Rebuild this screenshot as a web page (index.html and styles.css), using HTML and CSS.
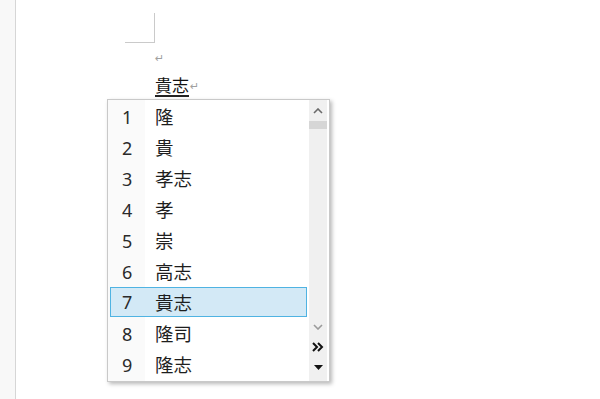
FILE: index.html
```html
<!DOCTYPE html>
<html lang="ja">
<head>
<meta charset="utf-8">
<title>IME</title>
<link rel="stylesheet" href="styles.css">
</head>
<body>
<div class="app">
  <div class="gutter"></div>
  <div class="page">
    <div class="crop"></div>
    <div class="para p1"><span class="ret">↵</span></div>
    <div class="para p2"><span class="comp">貴志</span><span class="ret">↵</span></div>
  </div>
</div>
<div class="ime">
  <div class="list">
    <div class="row"><span class="num">1</span><span class="txt">隆</span></div>
    <div class="row"><span class="num">2</span><span class="txt">貴</span></div>
    <div class="row"><span class="num">3</span><span class="txt">孝志</span></div>
    <div class="row"><span class="num">4</span><span class="txt">孝</span></div>
    <div class="row"><span class="num">5</span><span class="txt">崇</span></div>
    <div class="row"><span class="num">6</span><span class="txt">高志</span></div>
    <div class="row sel"><span class="num">7</span><span class="txt">貴志</span></div>
    <div class="row"><span class="num">8</span><span class="txt">隆司</span></div>
    <div class="row"><span class="num">9</span><span class="txt">隆志</span></div>
  </div>
  <div class="scroll">
    <div class="sbtn up"><svg width="10" height="6" viewBox="0 0 10 6"><polyline points="1,5 5,1 9,5" fill="none" stroke="#6a6a6a" stroke-width="1.6"/></svg></div>
    <div class="thumb"></div>
    <div class="spacer"></div>
    <div class="sbtn down"><svg width="10" height="6" viewBox="0 0 10 6"><polyline points="1,1 5,5 9,1" fill="none" stroke="#9a9a9a" stroke-width="1.6"/></svg></div>
    <div class="sbtn more"><svg width="12" height="10" viewBox="0 0 12 10"><polyline points="1,1 5,5 1,9" fill="none" stroke="#111" stroke-width="2"/><polyline points="6,1 10,5 6,9" fill="none" stroke="#111" stroke-width="2"/></svg></div>
    <div class="sbtn tri"><svg width="9" height="5" viewBox="0 0 9 5"><polygon points="0,0 9,0 4.5,5" fill="#111"/></svg></div>
  </div>
</div>
</body>
</html>
```
FILE: styles.css
```css
html, body {
  margin: 0;
  padding: 0;
  background: #fff;
  width: 600px;
  height: 399px;
  overflow: hidden;
  font-family: "Noto Sans", "Noto Sans CJK JP", sans-serif;
}
.app {
  display: flex;
  height: 399px;
}
.gutter {
  width: 15px;
  background: #f8f8f8;
  border-right: 1px solid #d6d6d6;
}
.page {
  flex: 1;
  display: flex;
  flex-direction: column;
}
.crop {
  margin-top: 13px;
  margin-left: 109px;
  width: 29px;
  height: 29px;
  border-right: 1px solid #cacaca;
  border-bottom: 1px solid #cacaca;
}
.para {
  padding-left: 139px;
  display: flex;
  align-items: flex-end;
}
.p1 {
  margin-top: 10px;
  height: 14px;
}
.p2 {
  margin-top: 8px;
  height: 22px;
}
.ret {
  font-family: "DejaVu Sans", sans-serif;
  font-size: 11px;
  color: #a0a0a0;
  line-height: 11px;
  margin-bottom: 3px;
}
.p2 .ret {
  margin-left: 1px;
  margin-bottom: 5px;
}
.comp {
  font-family: "Noto Sans CJK JP", sans-serif;
  font-size: 17px;
  line-height: 20px;
  color: #111;
  border-bottom: 2px solid #222;
}
.ime {
  position: absolute;
  left: 107px;
  top: 99px;
  width: 223px;
  height: 283px;
  box-sizing: border-box;
  border: 1px solid #c9c9c9;
  background: #fff;
  box-shadow: 2px 2px 4px rgba(0, 0, 0, 0.28);
  display: flex;
}
.list {
  width: 201px;
  box-sizing: border-box;
  padding: 1px 2px;
  background: linear-gradient(to right, #fafafa 37px, #fff 37px);
  display: flex;
  flex-direction: column;
}
.row {
  height: 31px;
  display: flex;
  align-items: center;
  box-sizing: border-box;
  color: #1e1e1e;
}
.row.sel {
  background: #d3e9f6;
  border: 1px solid #4fb3e2;
  height: 30px;
  margin-bottom: 1px;
}
.num {
  width: 45px;
  box-sizing: border-box;
  padding-left: 12px;
  font-family: "Noto Sans", sans-serif;
  font-size: 18px;
  line-height: 20px;
  color: #2a2a2a;
}
.row.sel .num {
  width: 44px;
  padding-left: 11px;
}
.txt {
  font-family: "Noto Sans CJK JP", sans-serif;
  font-size: 18.5px;
  line-height: 20px;
  margin-top: -1px;
}
.scroll {
  width: 18px;
  background: #f0f0f0;
  display: flex;
  flex-direction: column;
  align-items: stretch;
  padding-bottom: 4px;
  box-sizing: border-box;
}
.sbtn {
  display: flex;
  align-items: center;
  justify-content: center;
}
.up {
  height: 21px;
}
.thumb {
  height: 8px;
  background: #d6d6d6;
}
.spacer {
  flex: 1;
}
.down {
  height: 20px;
}
.more {
  height: 20px;
}
.tri {
  height: 20px;
}
```
